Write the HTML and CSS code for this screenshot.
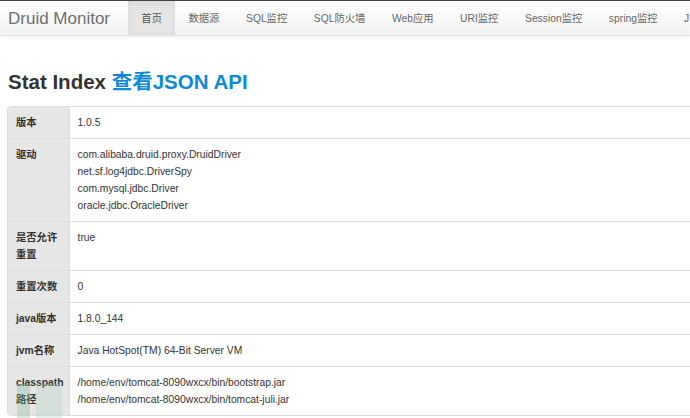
FILE: index.html
```html
<!DOCTYPE html>
<html>
<head>
<meta charset="utf-8">
<link rel="stylesheet" href="styles.css">
</head>
<body>
<div class="navbar">
  <a class="brand">Druid Monitor</a>
  <ul class="nav">
    <li class="active"><a>首页</a></li>
    <li><a>数据源</a></li>
    <li><a>SQL监控</a></li>
    <li><a>SQL防火墙</a></li>
    <li><a>Web应用</a></li>
    <li><a>URI监控</a></li>
    <li><a>Session监控</a></li>
    <li><a>spring监控</a></li>
    <li><a>JSON API</a></li>
  </ul>
</div>
<div class="container">
  <h2 class="title">Stat Index <a class="link">查看JSON API</a></h2>
  <table class="stat">
    <tr><th>版本</th><td>1.0.5</td></tr>
    <tr><th>驱动</th><td>com.alibaba.druid.proxy.DruidDriver<br>net.sf.log4jdbc.DriverSpy<br>com.mysql.jdbc.Driver<br>oracle.jdbc.OracleDriver</td></tr>
    <tr><th>是否允许<br>重置</th><td>true</td></tr>
    <tr><th>重置次数</th><td>0</td></tr>
    <tr><th>java版本</th><td>1.8.0_144</td></tr>
    <tr><th>jvm名称</th><td>Java HotSpot(TM) 64-Bit Server VM</td></tr>
    <tr><th>classpath<br>路径</th><td>/home/env/tomcat-8090wxcx/bin/bootstrap.jar<br>/home/env/tomcat-8090wxcx/bin/tomcat-juli.jar</td></tr>
  </table>
</div>
<div class="watermark"><span class="wm-a"></span><span class="wm-b"></span></div>
</body>
</html>
```
FILE: styles.css
```css
html, body {
  margin: 0;
  padding: 0;
  overflow: hidden;
  background: #fff;
}
body {
  font-family: "Liberation Sans", Arial, "Noto Sans CJK SC", sans-serif;
  font-size: 10.3px;
  line-height: 17px;
  color: #333;
  position: relative;
  width: 690px;
  height: 418px;
}
.navbar {
  display: flex;
  align-items: stretch;
  height: 34px;
  border-top: 1px solid #444;
  background: linear-gradient(#ffffff, #f2f2f2);
  border-bottom: 1px solid #e2e2e2;
  box-shadow: 0 1px 4px rgba(0,0,0,0.08);
  white-space: nowrap;
  overflow: hidden;
}
.brand {
  font-size: 17px;
  color: #6f6f6f;
  padding: 0 18px 0 8px;
  display: flex;
  align-items: center;
}
.nav {
  list-style: none;
  margin: 0;
  padding: 0;
  display: flex;
  flex-shrink: 0;
}
.nav li {
  display: flex;
}
.nav a {
  display: flex;
  align-items: center;
  padding: 0 13.3px;
  color: #666;
}
.nav li.active a {
  background: #e5e5e5;
  box-shadow: inset 0 2px 6px rgba(0,0,0,0.06);
  color: #555;
}
.container {
  padding: 0 0 0 7px;
}
.title {
  margin: 31px 0 0 1px;
  font-size: 20.5px;
  line-height: 30px;
  font-weight: bold;
  color: #333;
  height: 39px;
}
.link {
  color: #0d8ad6;
}
.stat {
  width: 760px;
  border-collapse: separate;
  border-spacing: 0;
  border: 1px solid #ddd;
  border-radius: 4px;
}
.stat th, .stat td {
  text-align: left;
  vertical-align: top;
  padding: 7px 8px;
  border-top: 1px solid #ddd;
}
.stat tr:first-child th, .stat tr:first-child td {
  border-top: none;
}
.stat th {
  width: 46px;
  background: #e6e6e6;
  font-weight: bold;
  border-right: 1px solid #ddd;
  color: #333;
  padding-right: 5px;
}
.stat td {
  color: #333;
}
.watermark {
  position: absolute;
  left: 17px;
  top: 384px;
  display: flex;
  gap: 6px;
  opacity: 0.3;
  pointer-events: none;
}
.wm-a {
  width: 13px;
  height: 34px;
  background: #7fb99a;
}
.wm-b {
  width: 26px;
  height: 34px;
  background: #a9d0b9;
}
```
